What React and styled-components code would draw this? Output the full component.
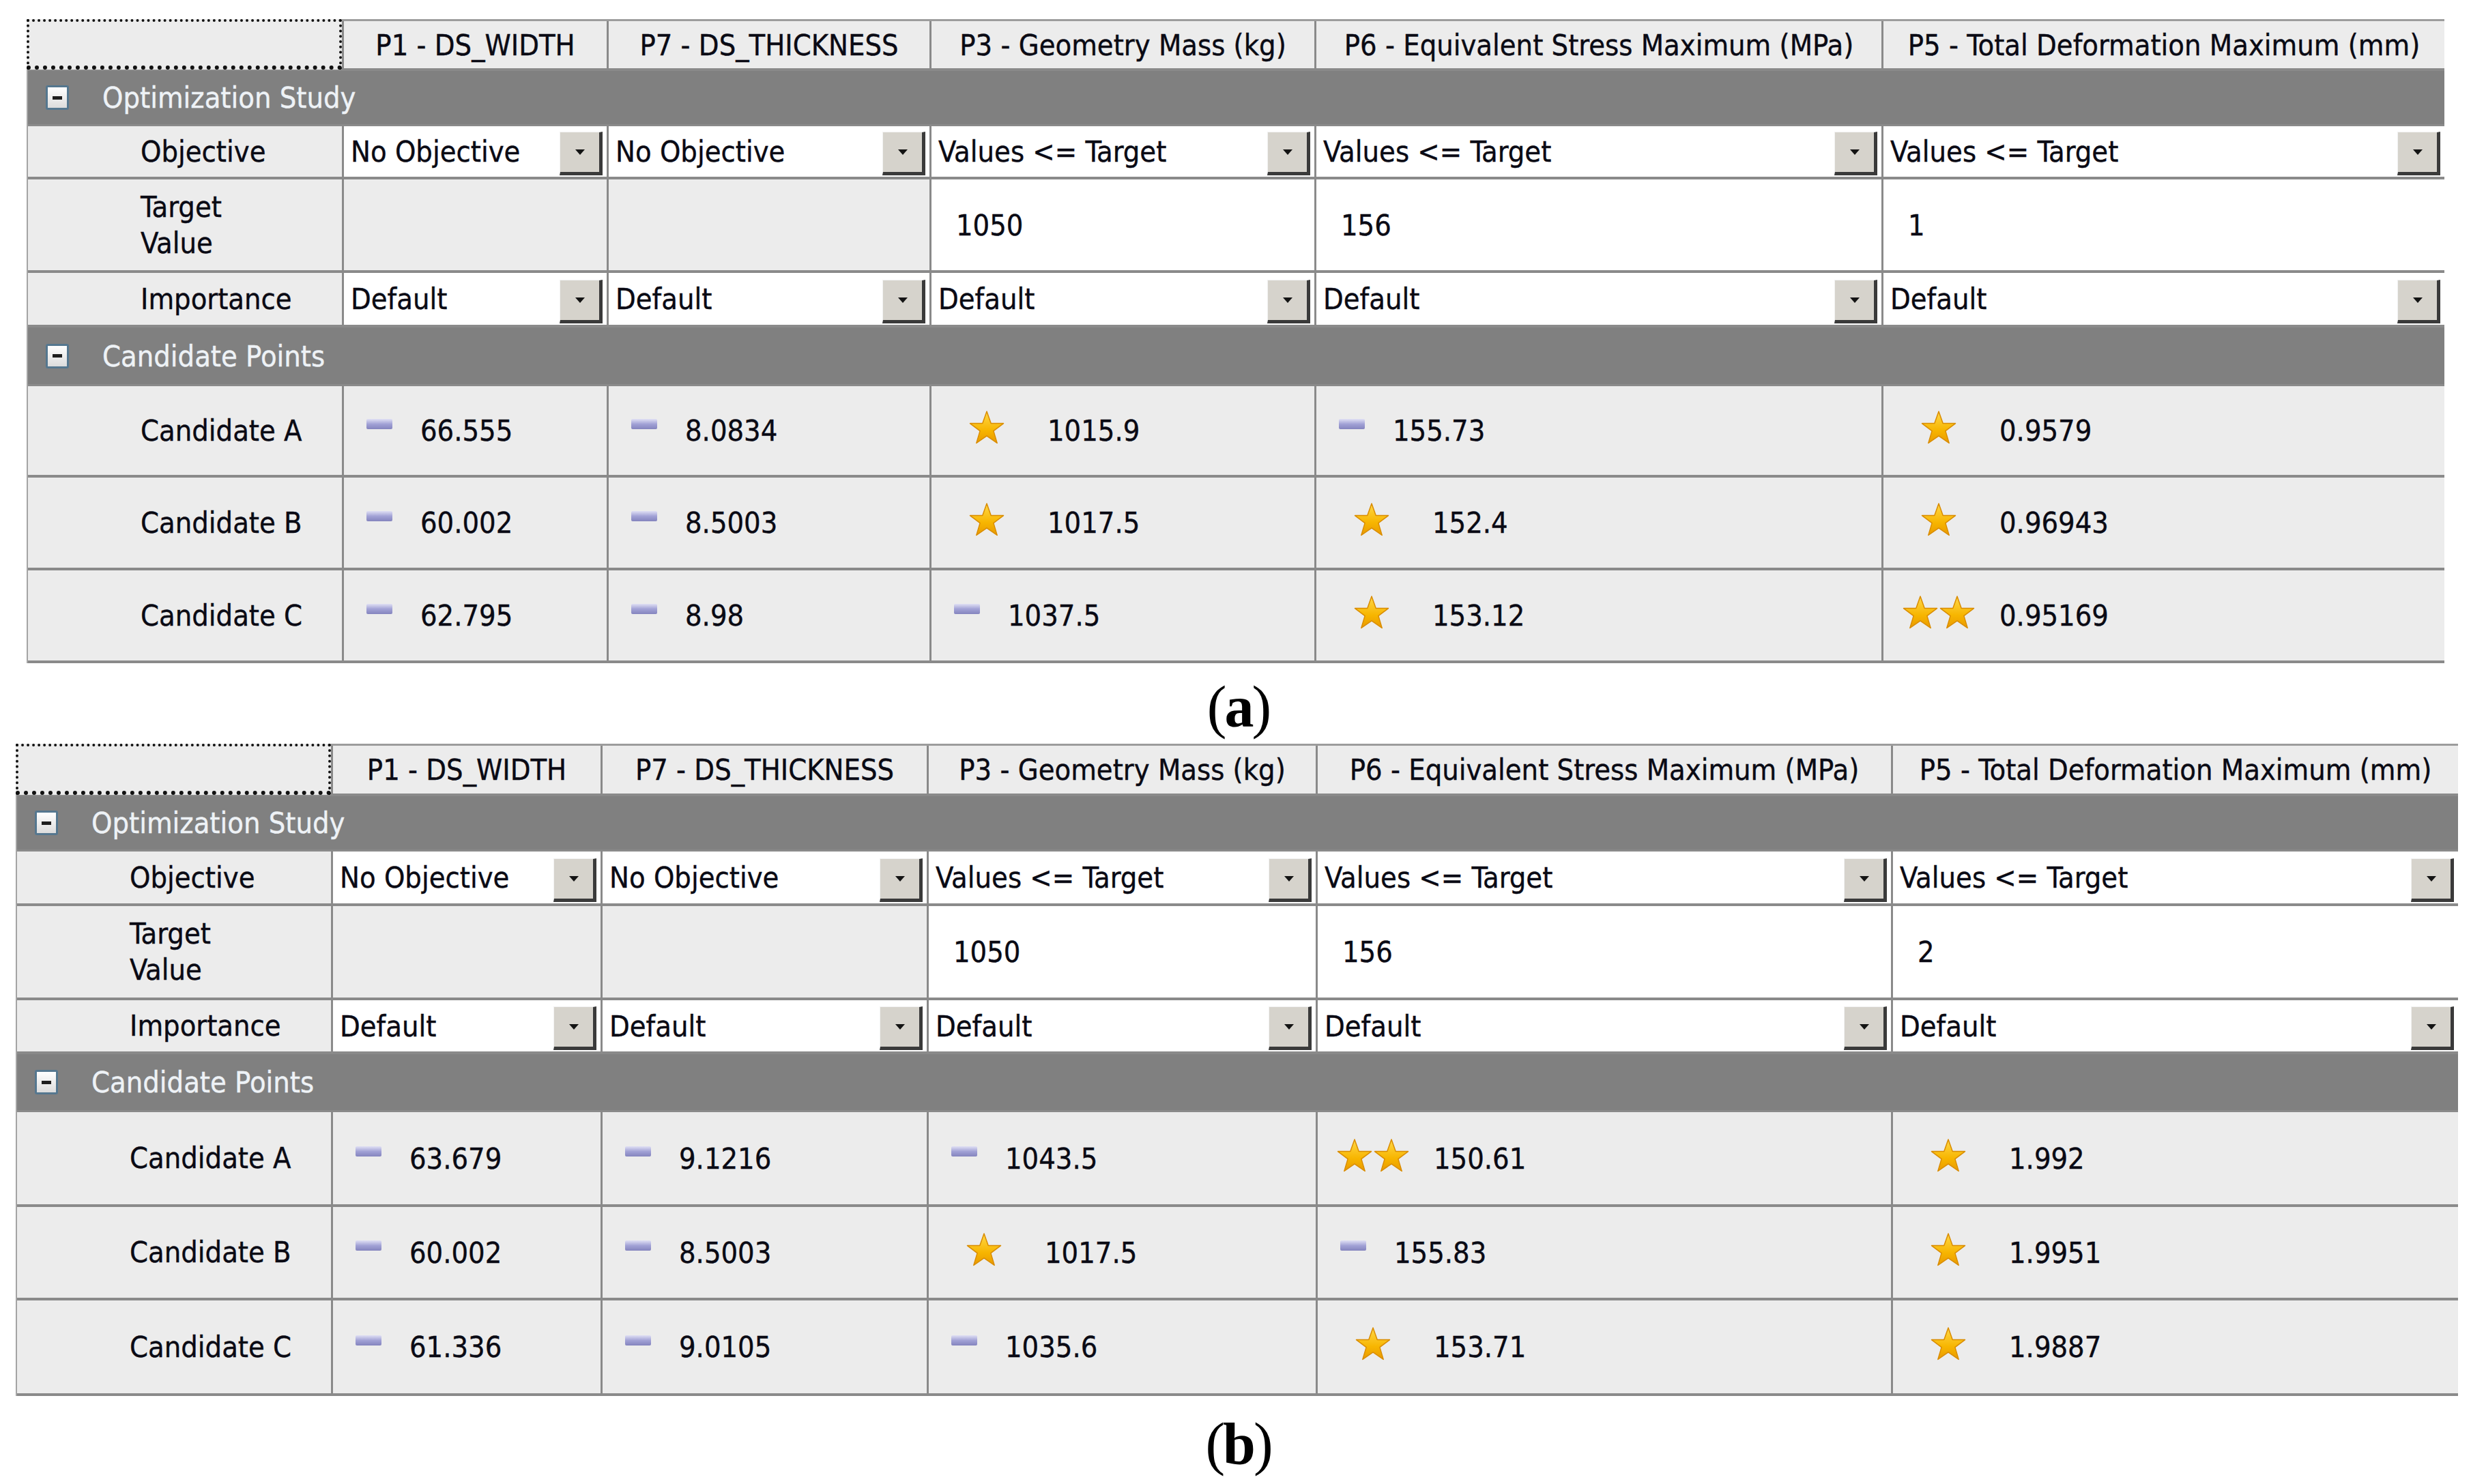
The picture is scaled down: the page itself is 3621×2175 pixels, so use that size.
import React from "react";
import styled, { createGlobalStyle } from "styled-components";

const GlobalStyle = createGlobalStyle`
  html, body {
    margin: 0;
    padding: 0;
    background: #ffffff;
  }
  body {
    font-family: "DejaVu Sans", "Noto Sans", sans-serif;
  }
`;

const LINE = "#8a8a8a";

const TABLES = [
  {
    id: "a",
    left: 39,
    width: 3543,
    top: 28,
    cols: "460px 385px 470px 561px 828px 1fr",
    h: { header: 73, study: 81, objective: 78, target: 137, importance: 80, points: 86, rows: [134, 136, 136] },
    targets: ["", "", "1050", "156", "1"],
    candidates: [
      { name: "Candidate A", cells: [[0, "66.555"], [0, "8.0834"], [1, "1015.9"], [0, "155.73"], [1, "0.9579"]] },
      { name: "Candidate B", cells: [[0, "60.002"], [0, "8.5003"], [1, "1017.5"], [1, "152.4"], [1, "0.96943"]] },
      { name: "Candidate C", cells: [[0, "62.795"], [0, "8.98"], [0, "1037.5"], [1, "153.12"], [2, "0.95169"]] },
    ],
    caption: { label: "a", pad: 21, height: 118 },
  },
  {
    id: "b",
    left: 23,
    width: 3579,
    top: 0,
    cols: "460px 392px 475px 567px 840px 1fr",
    h: { header: 74, study: 81, objective: 80, target: 138, importance: 79, points: 85, rows: [139, 137, 140] },
    targets: ["", "", "1050", "156", "2"],
    candidates: [
      { name: "Candidate A", cells: [[0, "63.679"], [0, "9.1216"], [0, "1043.5"], [2, "150.61"], [1, "1.992"]] },
      { name: "Candidate B", cells: [[0, "60.002"], [0, "8.5003"], [1, "1017.5"], [0, "155.83"], [1, "1.9951"]] },
      { name: "Candidate C", cells: [[0, "61.336"], [0, "9.0105"], [0, "1035.6"], [1, "153.71"], [1, "1.9887"]] },
    ],
    caption: { label: "b", pad: 27, height: 129 },
  },
];

const HEADERS = [
  "P1 - DS_WIDTH",
  "P7 - DS_THICKNESS",
  "P3 - Geometry Mass (kg)",
  "P6 - Equivalent Stress Maximum (MPa)",
  "P5 - Total Deformation Maximum (mm)",
];

const OBJECTIVES = ["No Objective", "No Objective", "Values <= Target", "Values <= Target", "Values <= Target"];

function Star() {
  return (
    <svg width="54" height="52" viewBox="0 0 54 52">
      <defs>
        <linearGradient id="starFill" x1="0" y1="0" x2="0" y2="1">
          <stop offset="0" stopColor="#ffd84a" />
          <stop offset="0.6" stopColor="#f7b500" />
          <stop offset="1" stopColor="#e99a00" />
        </linearGradient>
      </defs>
      <path
        d="M27 2 L33.2 19.4 L51.5 19.6 L36.9 30.6 L42.2 48.4 L27 37.8 L11.8 48.4 L17.1 30.6 L2.5 19.6 L20.8 19.4 Z"
        fill="url(#starFill)"
        stroke="#d98c00"
        strokeWidth="1.5"
        strokeLinejoin="round"
      />
    </svg>
  );
}

function DownArrow() {
  return (
    <svg width="16" height="10" viewBox="0 0 16 10">
      <path d="M1 1 H15 L8 9 Z" fill="#141414" />
    </svg>
  );
}

function Table({ t }) {
  return (
    <Grid $left={t.left} $width={t.width} $top={t.top}>
      <Row $cols={t.cols} $h={t.h.header}>
        <FocusCell />
        {HEADERS.map((h) => (
          <HeadCell key={h}>{h}</HeadCell>
        ))}
      </Row>

      <GroupRow $h={t.h.study}>
        <MinusBox />
        <GroupTitle>Optimization Study</GroupTitle>
      </GroupRow>

      <Row $cols={t.cols} $h={t.h.objective}>
        <LabelCell>Objective</LabelCell>
        {OBJECTIVES.map((o, i) => (
          <SelectCell key={i}>
            <span>{o}</span>
            <DropButton>
              <DownArrow />
            </DropButton>
          </SelectCell>
        ))}
      </Row>

      <Row $cols={t.cols} $h={t.h.target}>
        <LabelCell>
          Target
          <br />
          Value
        </LabelCell>
        {t.targets.map((v, i) => (
          <TargetCell key={i} $empty={v === ""}>
            {v}
          </TargetCell>
        ))}
      </Row>

      <Row $cols={t.cols} $h={t.h.importance}>
        <LabelCell>Importance</LabelCell>
        {OBJECTIVES.map((_, i) => (
          <SelectCell key={i}>
            <span>Default</span>
            <DropButton>
              <DownArrow />
            </DropButton>
          </SelectCell>
        ))}
      </Row>

      <GroupRow $h={t.h.points}>
        <MinusBox />
        <GroupTitle>Candidate Points</GroupTitle>
      </GroupRow>

      {t.candidates.map((c, r) => (
        <Row key={c.name} $cols={t.cols} $h={t.h.rows[r]}>
          <LabelCell>{c.name}</LabelCell>
          {c.cells.map(([rating, value], i) => (
            <ResultCell key={i}>
              <IconBox $wide={rating > 0}>
                {rating === 0 && <Bar />}
                {rating >= 1 && <Star />}
                {rating >= 2 && <Star />}
              </IconBox>
              <span>{value}</span>
            </ResultCell>
          ))}
        </Row>
      ))}
    </Grid>
  );
}

export default function App() {
  return (
    <>
      <GlobalStyle />
      <Page>
        {TABLES.map((t) => (
          <React.Fragment key={t.id}>
            <Table t={t} />
            <Caption $pad={t.caption.pad} $h={t.caption.height}>
              (<b>{t.caption.label}</b>)
            </Caption>
          </React.Fragment>
        ))}
      </Page>
    </>
  );
}

const Page = styled.div`
  width: 3621px;
  display: flex;
  flex-direction: column;
`;

const Grid = styled.div`
  margin-left: ${(p) => p.$left}px;
  margin-top: ${(p) => p.$top}px;
  width: ${(p) => p.$width}px;
  box-sizing: border-box;
  border-top: 3px solid #9c9c9c;
  border-left: 2px solid #a4a4a4;
  font-family: "DejaVu Sans Condensed", "DejaVu Sans", sans-serif;
  font-stretch: condensed;
  font-size: 43px;
  -webkit-text-stroke: 0.4px currentColor;
  color: #0a0a14;
`;

const Row = styled.div`
  display: grid;
  grid-template-columns: ${(p) => p.$cols};
  column-gap: 3px;
  height: ${(p) => p.$h}px;
  box-sizing: border-box;
  background: ${LINE};
  border-bottom: 4px solid ${LINE};
`;

const Cell = styled.div`
  display: flex;
  align-items: center;
  min-width: 0;
  white-space: nowrap;
  background: #ececec;
`;

const FocusCell = styled(Cell)`
  box-sizing: border-box;
  margin-top: -3px;
  margin-left: -2px;
  margin-bottom: -2px;
  border: 4px dotted #111111;
  border-bottom-width: 6px;
`;

const HeadCell = styled(Cell)`
  justify-content: center;
`;

const LabelCell = styled(Cell)`
  padding-left: 165px;
  line-height: 53px;
`;

const SelectCell = styled(Cell)`
  background: #ffffff;
  padding-left: 10px;
  padding-right: 6px;
`;

const DropButton = styled.span`
  margin-left: auto;
  align-self: flex-end;
  margin-bottom: 2px;
  width: 57px;
  height: 58px;
  background: #d6d3cc;
  border-top: 1px solid #f2f2f2;
  border-left: 1px solid #f2f2f2;
  border-right: 5px solid #3a3a3a;
  border-bottom: 5px solid #3a3a3a;
  display: flex;
  align-items: center;
  justify-content: center;
`;

const TargetCell = styled(Cell)`
  background: ${(p) => (p.$empty ? "#ececec" : "#ffffff")};
  padding-left: 36px;
`;

const ResultCell = styled(Cell)`
  padding-left: 26px;
  gap: 34px;
`;

const IconBox = styled.span`
  width: ${(p) => (p.$wide ? 110 : 52)}px;
  display: flex;
  justify-content: center;
  align-items: center;
  margin-top: -8px;
`;

const Bar = styled.span`
  width: 38px;
  height: 15px;
  margin-top: -12px;
  border-radius: 2px;
  background: linear-gradient(#e0e0f4, #a2a2d6 50%, #8484be);
`;

const GroupRow = styled.div`
  display: flex;
  align-items: center;
  height: ${(p) => p.$h}px;
  box-sizing: border-box;
  padding-left: 26px;
  gap: 49px;
  background: #808080;
  border-bottom: 3px solid ${LINE};
`;

const MinusBox = styled.span`
  width: 28px;
  height: 30px;
  border: 3px solid #55778f;
  border-radius: 3px;
  background: linear-gradient(#ffffff, #dcdcdc);
  display: flex;
  align-items: center;
  justify-content: center;

  &::after {
    content: "";
    width: 14px;
    height: 5px;
    background: #1e1e1e;
  }
`;

const GroupTitle = styled.span`
  color: #eef2f6;
  -webkit-text-stroke: 0.4px #eef2f6;
`;

const Caption = styled.div`
  height: ${(p) => p.$h}px;
  box-sizing: border-box;
  padding-top: ${(p) => p.$pad}px;
  padding-left: 8px;
  display: flex;
  justify-content: center;
  align-items: flex-start;
  font-family: "Liberation Serif", "Times New Roman", serif;
  font-size: 86px;
  line-height: 1;
  letter-spacing: -3px;
  color: #000;

  b {
    font-weight: bold;
  }
`;
